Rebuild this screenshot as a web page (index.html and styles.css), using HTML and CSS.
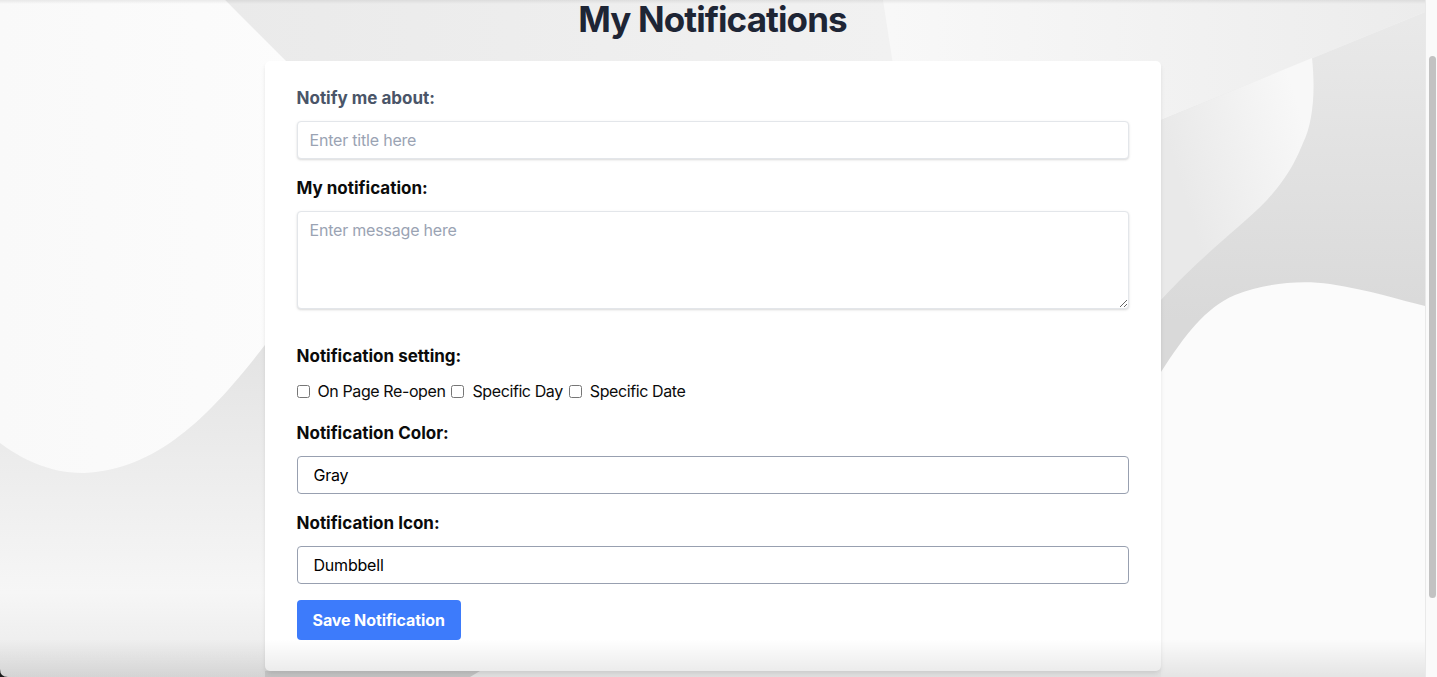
FILE: index.html
```html
<!DOCTYPE html>
<html lang="en">
<head>
<meta charset="utf-8">
<title>My Notifications</title>
<link rel="stylesheet" href="styles.css">
</head>
<body>
<div class="app">
  <main class="page">
    <div class="bg" aria-hidden="true">
      <svg viewBox="0 0 1425 677" preserveAspectRatio="none" xmlns="http://www.w3.org/2000/svg">
        <defs>
          <linearGradient id="gTopMid" x1="225" y1="0" x2="890" y2="0" gradientUnits="userSpaceOnUse">
            <stop offset="0" stop-color="#eaeaea"/>
            <stop offset="1" stop-color="#f1f1f1"/>
          </linearGradient>
          <linearGradient id="gTopRight" x1="890" y1="0" x2="1425" y2="0" gradientUnits="userSpaceOnUse">
            <stop offset="0" stop-color="#f8f8f8"/>
            <stop offset="1" stop-color="#ececec"/>
          </linearGradient>
          <linearGradient id="gRight" x1="0" y1="20" x2="0" y2="320" gradientUnits="userSpaceOnUse">
            <stop offset="0" stop-color="#e9e9e9"/>
            <stop offset="1" stop-color="#d9d9d9"/>
          </linearGradient>
          <linearGradient id="gCurl" x1="1170" y1="150" x2="1300" y2="110" gradientUnits="userSpaceOnUse">
            <stop offset="0" stop-color="#e9e9e9"/>
            <stop offset="1" stop-color="#f8f8f8"/>
          </linearGradient>
          <linearGradient id="gLeftLow" x1="0" y1="340" x2="0" y2="677" gradientUnits="userSpaceOnUse">
            <stop offset="0" stop-color="#e3e3e3"/>
            <stop offset="0.4" stop-color="#ededed"/>
            <stop offset="0.75" stop-color="#f6f6f6"/>
            <stop offset="1" stop-color="#e9e9e9"/>
          </linearGradient>
          <linearGradient id="gLeftWhite" x1="0" y1="0" x2="300" y2="0" gradientUnits="userSpaceOnUse">
            <stop offset="0" stop-color="#f9f9f9"/>
            <stop offset="1" stop-color="#fcfcfc"/>
          </linearGradient>
          <linearGradient id="gTopShade" x1="0" y1="0" x2="0" y2="4" gradientUnits="userSpaceOnUse">
            <stop offset="0" stop-color="#000" stop-opacity="0.07"/>
            <stop offset="1" stop-color="#000" stop-opacity="0"/>
          </linearGradient>
        </defs>
        <rect x="0" y="0" width="1425" height="677" fill="#f7f7f7"/>
        <path d="M225 0 H885 L900 110 H330 Z" fill="url(#gTopMid)"/>
        <path d="M883 0 H1425 V12 L1161 120 L900 110 Z" fill="url(#gTopRight)"/>
        <path d="M1161 120 L1425 12 V677 H1161 Z" fill="url(#gRight)"/>
        <path d="M1161 120 L1312 58 C1316 95 1312 125 1303 143 C1296 160 1288 177 1267 200 C1240 228 1205 252 1161 300 Z" fill="url(#gCurl)"/>
        <path d="M1161 372 C1185 335 1205 308 1235 295 C1265 283 1300 280 1330 284 C1370 290 1400 300 1425 306 V677 H1161 Z" fill="#fbfbfb"/>
        <path d="M0 0 H225 L330 105 V300 L265 345 C215 410 160 470 85 473 C50 474 20 458 0 443 Z" fill="url(#gLeftWhite)"/>
        <path d="M0 443 C20 458 50 474 85 473 C160 470 215 410 265 345 L330 300 V677 H0 Z" fill="url(#gLeftLow)"/>
        <path d="M265 671 H480 L470 677 H265 Z" fill="#d6d6d6"/>
        <rect x="0" y="0" width="1425" height="4" fill="url(#gTopShade)"/>
        <path d="M0 669 Q0 677 8 677 H0 Z" fill="#1c1c1c"/>
      </svg>
    </div>

    <h1 class="title">My Notifications</h1>

    <form class="card">
      <label class="label label-muted" for="title">Notify me about:</label>
      <input id="title" class="field field-soft" type="text" placeholder="Enter title here">

      <label class="label label-gap" for="message">My notification:</label>
      <textarea id="message" class="field field-soft area" rows="4" placeholder="Enter message here"></textarea>

      <div class="label label-setting">Notification setting:</div>
      <div class="checks">
        <input type="checkbox" id="c1"><label for="c1">On Page Re-open</label>
        <input type="checkbox" id="c2"><label for="c2">Specific Day</label>
        <input type="checkbox" id="c3"><label for="c3">Specific Date</label>
      </div>

      <label class="label label-color" for="color">Notification Color:</label>
      <select id="color" class="field select"><option>Gray</option></select>

      <label class="label label-gap" for="icon">Notification Icon:</label>
      <select id="icon" class="field select"><option>Dumbbell</option></select>

      <button type="button" class="save">Save Notification</button>
    </form>

    <div class="fade-bottom" aria-hidden="true"></div>
  </main>
  <aside class="scrollbar" aria-hidden="true"><div class="thumb"></div></aside>
</div>
</body>
</html>
```

FILE: styles.css
```css
html, body {
  margin: 0;
  height: 100%;
  overflow: hidden;
}

body {
  font-family: Inter, "Liberation Sans", sans-serif;
  background: #fafafa;
}

.app {
  display: flex;
  height: 100vh;
}

.page {
  flex: 1;
  position: relative;
  display: flex;
  flex-direction: column;
  align-items: center;
  overflow: hidden;
}

.bg {
  position: absolute;
  inset: 0;
  z-index: 0;
}

.bg svg {
  display: block;
  width: 100%;
  height: 100%;
}

.title,
.card {
  position: relative;
  z-index: 1;
}

.title {
  margin: 1px 0 0;
  font-size: 35px;
  line-height: 36px;
  font-weight: 700;
  color: #1e2535;
  letter-spacing: -0.9px;
}

.card {
  margin-top: 24px;
  width: 896px;
  box-sizing: border-box;
  padding: 27px 32px 31px;
  background: #fff;
  border-radius: 5px;
  box-shadow: 0 4px 6px -1px rgba(0, 0, 0, 0.08), 0 2px 4px -1px rgba(0, 0, 0, 0.05);
  display: flex;
  flex-direction: column;
  align-items: flex-start;
}

.label {
  display: block;
  font-size: 17px;
  line-height: 20px;
  font-weight: 700;
  color: #0b0b0b;
  margin-bottom: 13px;
}

.label-muted {
  color: #4a5568;
}

.label-gap {
  margin-top: 19px;
}

.label-setting {
  margin-top: 37px;
  margin-bottom: 15px;
}

.label-color {
  margin-top: 22px;
}

.field {
  width: 100%;
  box-sizing: border-box;
  margin: 0;
  font-family: inherit;
  font-size: 16px;
  line-height: 20px;
  border-radius: 4px;
  background: #fff;
  outline: none;
}

.field-soft {
  height: 38px;
  padding: 8px 12px;
  border: 1px solid #e3e6ea;
  box-shadow: 0 1px 3px rgba(0, 0, 0, 0.1), 0 1px 2px rgba(0, 0, 0, 0.06);
  color: #4a5568;
  letter-spacing: -0.2px;
}

.field-soft::placeholder {
  color: #9aa3b3;
  opacity: 1;
}

.area {
  height: 98px;
  display: block;
}

.select {
  -webkit-appearance: none;
  appearance: none;
  height: 38px;
  padding: 0 16px;
  border: 1px solid #98a0b0;
  color: #000;
  letter-spacing: -0.2px;
}

.checks {
  display: flex;
  align-items: center;
  height: 20px;
  font-size: 16px;
  line-height: 20px;
  color: #0b0b0b;
  letter-spacing: -0.4px;
}

.checks input {
  margin: 0;
  width: 13px;
  height: 13px;
}

.checks label {
  margin: 0 6px 0 8px;
}

.save {
  margin-top: 16px;
  height: 40px;
  padding: 0 16px;
  background: #3d7bfb;
  color: #fff;
  border: 0;
  border-radius: 4px;
  font-family: inherit;
  font-size: 16px;
  font-weight: 700;
  letter-spacing: -0.1px;
  cursor: pointer;
}

.fade-bottom {
  position: absolute;
  left: 0;
  right: 0;
  bottom: 0;
  height: 38px;
  background: linear-gradient(rgba(0, 0, 0, 0), rgba(0, 0, 0, 0.09));
  z-index: 2;
  pointer-events: none;
}

.scrollbar {
  flex: none;
  width: 12px;
  box-sizing: border-box;
  background: #fafafa;
  border-left: 1px solid #e9e9e9;
  padding: 56px 0 0 3px;
}

.thumb {
  width: 7px;
  height: 542px;
  background: #c2c2c2;
  border-radius: 4px;
}
```
